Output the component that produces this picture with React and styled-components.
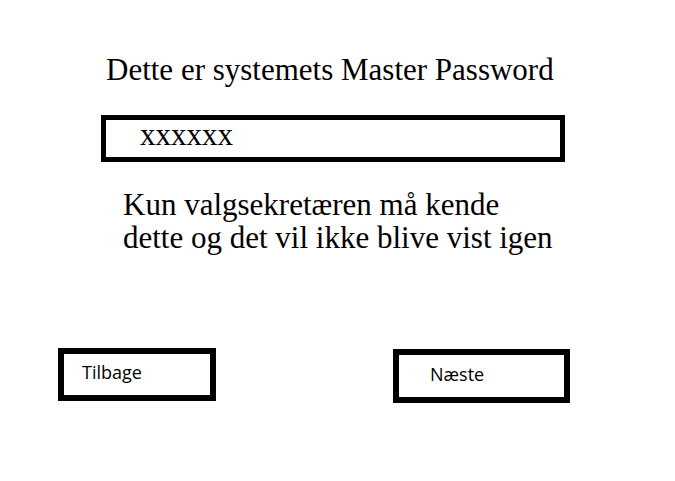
import React from 'react'
import styled, { createGlobalStyle } from 'styled-components'

const GlobalStyle = createGlobalStyle`
  html, body {
    margin: 0;
    padding: 0;
    background: #fff;
  }
`

const Page = styled.div`
  display: flex;
  flex-direction: column;
  align-items: flex-start;
  width: 675px;
  height: 481px;
  padding-top: 52px;
  box-sizing: border-box;
  font-family: "Liberation Serif", "Times New Roman", serif;
  color: #000;
`

const Title = styled.h1`
  margin: 0 0 0 106px;
  font-size: 31px;
  font-weight: normal;
  line-height: 36px;
  white-space: nowrap;
`

const PasswordBox = styled.div`
  margin: 27px 0 0 101px;
  width: 464px;
  height: 47px;
  box-sizing: border-box;
  border: 5px solid #000;
  padding-left: 34px;
  font-size: 31px;
  line-height: 29px;
`

const Notice = styled.p`
  margin: 26px 0 0 123px;
  font-size: 31px;
  line-height: 33px;
  white-space: nowrap;
`

const ButtonRow = styled.div`
  display: flex;
  align-items: flex-start;
  margin: 94px 0 0 58px;
  gap: 177px;
`

const NavButton = styled.div`
  width: ${(p) => p.$w}px;
  height: ${(p) => p.$h}px;
  margin-top: ${(p) => p.$top || 0}px;
  box-sizing: border-box;
  border: 6px solid #000;
  padding: ${(p) => p.$pt}px 0 0 ${(p) => p.$pl}px;
  font-family: "Open Sans", "Noto Sans", sans-serif;
  font-size: 18px;
  line-height: 24px;
  cursor: pointer;
`

export default function App() {
  return (
    <>
      <GlobalStyle />
      <Page>
        <Title>Dette er systemets Master Password</Title>
        <PasswordBox>xxxxxx</PasswordBox>
        <Notice>
          Kun valgsekretæren må kende
          <br />
          dette og det vil ikke blive vist igen
        </Notice>
        <ButtonRow>
          <NavButton $w={158} $h={53} $pt={6} $pl={18}>Tilbage</NavButton>
          <NavButton $w={177} $h={54} $top={1} $pt={7} $pl={31}>Næste</NavButton>
        </ButtonRow>
      </Page>
    </>
  )
}
